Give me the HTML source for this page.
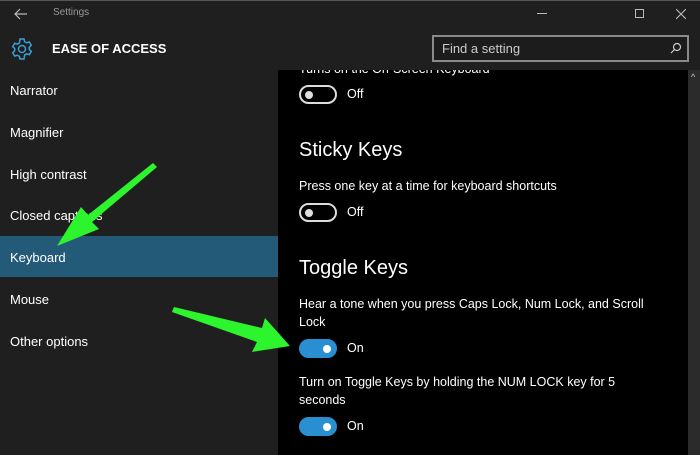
<!DOCTYPE html>
<html><head><style>
*{margin:0;padding:0;box-sizing:border-box}
body{width:700px;height:455px;background:#1f1f1f;font-family:"Liberation Sans",sans-serif;color:#fff;position:relative;overflow:hidden}
.a{position:absolute;white-space:nowrap}
.nav{font-size:13px;left:10px}
.c{font-size:12.5px;left:299px}
.h{font-size:20px;left:299px;font-weight:300}
.tg{position:absolute;left:299px;width:38px;height:19px;border:2px solid #ddd;border-radius:10px}
.tg i{position:absolute;left:4px;top:4px;width:8px;height:8px;border-radius:50%;background:#ddd}
.on{background:#2a8fd0;border-color:#2a8fd0}
.on i{left:auto;right:4px;background:#fff}
</style></head><body>
<div class="a" style="left:0;top:0;width:700px;height:1px;background:#555"></div>
<svg class="a" style="left:14px;top:8px" width="14" height="12" viewBox="0 0 14 12"><path d="M13 6H1M6 1 1 6l5 5" fill="none" stroke="#bbb" stroke-width="1.2"/></svg>
<div class="a" style="left:53px;top:7px;font-size:10px;color:#999">Settings</div>
<div class="a" style="left:537px;top:13px;width:10px;height:1px;background:#bbb"></div>
<div class="a" style="left:635px;top:9px;width:9px;height:9px;border:1px solid #bbb"></div>
<svg class="a" style="left:676px;top:9px" width="10" height="10"><path d="M0 0 10 10M10 0 0 10" stroke="#bbb" stroke-width="1.1"/></svg>
<svg class="a" style="left:10px;top:37px" width="24" height="24" viewBox="0 0 24 24"><g fill="none" stroke="#3a9fd6" stroke-width="1.5"><circle cx="12" cy="12" r="3.5"/><path d="M10 2h4l.6 2.6 2.2 1.2 2.5-.9 2 3.4-2 1.8v2.4l2 1.8-2 3.4-2.5-.9-2.2 1.2L14 22h-4l-.6-2.6-2.2-1.2-2.5.9-2-3.4 2-1.8v-2.4l-2-1.8 2-3.4 2.5.9 2.2-1.2z"/></g></svg>
<div class="a" style="left:52px;top:41px;font-size:13px;font-weight:bold">EASE OF ACCESS</div>
<div class="a" style="left:432px;top:35px;width:257px;height:27px;border:2px solid #8a8a8a;background:#1c1c1c"></div>
<div class="a" style="left:442px;top:41px;font-size:13px;color:#ccc">Find a setting</div>
<svg class="a" style="left:670px;top:42px" width="12" height="12"><circle cx="7" cy="5" r="3.5" fill="none" stroke="#ccc" stroke-width="1.2"/><path d="M4.5 7.5 1 11" stroke="#ccc" stroke-width="1.2"/></svg>
<div class="a" style="left:278px;top:70px;width:410px;height:385px;background:#000"></div>
<div class="a" style="left:688px;top:70px;width:12px;height:385px;background:#2b2b2b"></div>
<div class="a" style="left:691px;top:72px;font-size:9px;color:#ccc">^</div>
<div class="a" style="left:0;top:236px;width:278px;height:41px;background:#235a78"></div>
<div class="a nav" style="top:83px">Narrator</div>
<div class="a nav" style="top:125px">Magnifier</div>
<div class="a nav" style="top:167px">High contrast</div>
<div class="a nav" style="top:208px">Closed captions</div>
<div class="a nav" style="top:250px">Keyboard</div>
<div class="a nav" style="top:292px">Mouse</div>
<div class="a nav" style="top:334px">Other options</div>
<div class="a c" style="top:62px">Turns on the On-Screen Keyboard</div>
<div class="a" style="left:278px;top:62px;width:410px;height:8px;background:#1f1f1f"></div>
<div class="tg" style="top:85px"><i></i></div><div class="a c" style="left:347px;top:87px">Off</div>
<div class="a h" style="top:139px">Sticky Keys</div>
<div class="a c" style="top:179px">Press one key at a time for keyboard shortcuts</div>
<div class="tg" style="top:203px"><i></i></div><div class="a c" style="left:347px;top:205px">Off</div>
<div class="a h" style="top:257px">Toggle Keys</div>
<div class="a c" style="top:297px">Hear a tone when you press Caps Lock, Num Lock, and Scroll</div>
<div class="a c" style="top:315px">Lock</div>
<div class="tg on" style="top:339px"><i></i></div><div class="a c" style="left:347px;top:341px">On</div>
<div class="a c" style="top:375px">Turn on Toggle Keys by holding the NUM LOCK key for 5</div>
<div class="a c" style="top:393px">seconds</div>
<div class="tg on" style="top:417px"><i></i></div><div class="a c" style="left:347px;top:419px">On</div>
<svg class="a" style="left:0;top:0" width="700" height="455"><g fill="#2df52d">
<polygon points="157,167 153,163 88,215 81,207 57,246 99,229 92,222"/>
<polygon points="172,312 174,307 262,328 265,318 290,346 252,352 257,342"/>
</g></svg>
</body></html>
